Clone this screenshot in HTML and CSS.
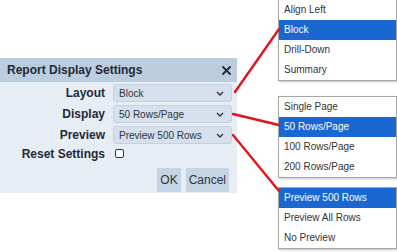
FILE: index.html
```html
<!DOCTYPE html>
<html lang="en">
<head>
    <meta charset="UTF-8">
    <title>Report Display Settings</title>
    <link rel="stylesheet" href="styles.css">
</head>
<body>
    <div class="dialog">
        <div class="dialog-title">
            <span>Report Display Settings</span>
            <svg class="close" width="9" height="9" viewBox="0 0 9 9">
                <path d="M1 1 L8 8 M8 1 L1 8" stroke="#1f2a36" stroke-width="1.8" stroke-linecap="round"/>
            </svg>
        </div>
        <div class="dialog-body">
            <div class="form">
                <label>Layout</label>
                <div class="select">
                    <span>Block</span>
                    <svg width="8" height="5" viewBox="0 0 8 5"><path d="M1 1 L4 4 L7 1" stroke="#333" stroke-width="1.3" fill="none"/></svg>
                </div>
                <label>Display</label>
                <div class="select">
                    <span>50 Rows/Page</span>
                    <svg width="8" height="5" viewBox="0 0 8 5"><path d="M1 1 L4 4 L7 1" stroke="#333" stroke-width="1.3" fill="none"/></svg>
                </div>
                <label>Preview</label>
                <div class="select">
                    <span>Preview 500 Rows</span>
                    <svg width="8" height="5" viewBox="0 0 8 5"><path d="M1 1 L4 4 L7 1" stroke="#333" stroke-width="1.3" fill="none"/></svg>
                </div>
                <label>Reset Settings</label>
                <div class="check-cell"><span class="checkbox"></span></div>
            </div>
            <div class="actions">
                <button>OK</button>
                <button>Cancel</button>
            </div>
        </div>
    </div>

    <div class="menus">
        <ul class="menu menu-layout">
            <li>Align Left</li>
            <li class="selected">Block</li>
            <li>Drill-Down</li>
            <li>Summary</li>
        </ul>
        <ul class="menu menu-display">
            <li>Single Page</li>
            <li class="selected">50 Rows/Page</li>
            <li>100 Rows/Page</li>
            <li>200 Rows/Page</li>
        </ul>
        <ul class="menu menu-preview">
            <li class="selected">Preview 500 Rows</li>
            <li>Preview All Rows</li>
            <li>No Preview</li>
        </ul>
    </div>

    <!-- callout lines from each field to its option list -->
    <svg class="callouts" width="397" height="252" viewBox="0 0 397 252">
        <g stroke="#e3141b" stroke-width="2.4" stroke-linecap="round">
            <line x1="235" y1="92" x2="279" y2="29"/>
            <line x1="233" y1="114" x2="279" y2="125"/>
            <line x1="233" y1="135" x2="279" y2="191"/>
        </g>
    </svg>
</body>
</html>
```

FILE: styles.css
```css
body {
    margin: 0;
    width: 397px;
    height: 252px;
    background: #ffffff;
    display: flex;
    align-items: flex-start;
    font-family: "Liberation Sans", Arial, sans-serif;
    color: #222;
    overflow: hidden;
}

.dialog {
    width: 237px;
    margin-top: 58px;
    background: #e6edf5;
}

.dialog-title {
    height: 24px;
    background: #bccde0;
    display: flex;
    align-items: center;
    justify-content: space-between;
    padding: 0 6px 0 7px;
    font-size: 12px;
    font-weight: bold;
    color: #1f2a36;
}

.dialog-body {
    padding: 2px 5px 1px 0;
}

.form {
    display: grid;
    grid-template-columns: 105px 1fr;
    column-gap: 8px;
    row-gap: 3px;
}

.form label {
    text-align: right;
    font-size: 12px;
    font-weight: bold;
    color: #1f2a36;
    display: flex;
    align-items: center;
    justify-content: flex-end;
}

.select {
    height: 18px;
    box-sizing: border-box;
    border: 1px solid #c4d1e0;
    border-radius: 3px;
    background: #d6e0ec;
    display: flex;
    align-items: center;
    justify-content: space-between;
    padding: 0 7px 0 5px;
    font-size: 10px;
    color: #2b3440;
}

.check-cell {
    height: 13px;
    display: flex;
    align-items: center;
    padding-left: 2px;
}

.checkbox {
    width: 9px;
    height: 9px;
    box-sizing: border-box;
    border: 1px solid #333;
    border-radius: 2px;
    background: #fff;
}

.actions {
    display: flex;
    justify-content: flex-end;
    gap: 5px;
    margin-top: 7px;
    padding-right: 3px;
}

.actions button {
    height: 24px;
    border: none;
    background: #c6d5e6;
    font-family: "Liberation Sans", Arial, sans-serif;
    font-size: 12px;
    color: #333;
    padding: 0 3px;
}

.menus {
    margin-left: 41px;
    width: 119px;
    display: flex;
    flex-direction: column;
}

.menu {
    list-style: none;
    margin: 0;
    padding: 0;
    border: 1px solid #a6a6a6;
    background: #fff;
    box-shadow: 1px 1px 2px rgba(0, 0, 0, 0.25);
}

.menu li {
    height: 20px;
    line-height: 20px;
    padding-left: 5px;
    font-size: 10px;
    color: #333;
}

.menu li.selected {
    background: #1a67d2;
    color: #fff;
}

.menu-layout {
    margin-top: -1px;
}

.menu-display {
    margin-top: 15px;
}

.menu-preview {
    margin-top: 9px;
}

.callouts {
    position: absolute;
    top: 0;
    left: 0;
    pointer-events: none;
}
```
